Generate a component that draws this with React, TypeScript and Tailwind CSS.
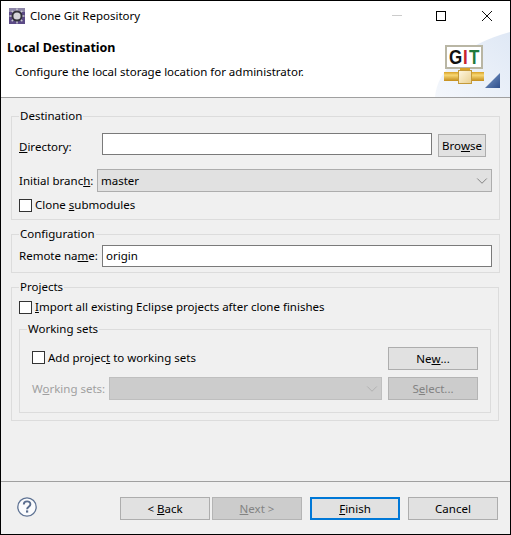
import React from 'react';
import { ChevronDown } from 'lucide-react';

const Btn = ({ children, className = '', disabled = false, focused = false }: { children: React.ReactNode; className?: string; disabled?: boolean; focused?: boolean }) => (
  <div
    className={
      'flex h-[23px] w-[90px] shrink-0 items-center justify-center text-[11.5px] ' +
      (disabled
        ? 'border border-[#b4b4b4] bg-[#cccccc] text-[#838383] '
        : focused
        ? 'border-2 border-[#0078d7] bg-[#e1e1e1] text-black '
        : 'border border-[#adadad] bg-[#e1e1e1] text-black ') +
      className
    }
  >
    {children}
  </div>
);

const Check = ({ className = '' }: { className?: string }) => (
  <div className={'h-[13px] w-[13px] shrink-0 border border-[#333333] bg-white ' + className} />
);

const Combo = ({ value, className = '', disabled = false }: { value?: string; className?: string; disabled?: boolean }) => (
  <div
    className={
      'flex h-[23px] items-center justify-between border pl-[3px] ' +
      (disabled ? 'border-[#bfbfbf] bg-[#cccccc] ' : 'border-[#adadad] bg-[#e1e1e1] ') +
      className
    }
  >
    <span className="text-[11.5px]">{value}</span>
    <ChevronDown size={18} strokeWidth={0.8} className={disabled ? 'text-[#a0a0a0]' : 'text-[#444444]'} />
  </div>
);

const Group = ({ title, className = '', children }: { title: string; className?: string; children: React.ReactNode }) => (
  <fieldset className={'border border-[#dcdcdc] ' + className}>
    <legend className="ml-[7px] px-[1px] text-[11.5px] leading-[16px]">{title}</legend>
    {children}
  </fieldset>
);

const TitleIcon = () => (
  <svg width="16" height="16" viewBox="0 0 16 16">
    <rect width="16" height="16" fill="#5b4a86" />
    <path d="M0 0h16v4H0z" fill="#8d86a8" />
    <g stroke="#c9c9d0" strokeWidth="1.5">
      <path d="M8 .5v3M8 12.5v3M.5 8h3M12.5 8h3M2.7 2.7l2 2M11.3 11.3l2 2M13.3 2.7l-2 2M4.7 11.3l-2 2" />
    </g>
    <circle cx="8" cy="8" r="5.5" fill="#33333c" />
    <circle cx="8" cy="8" r="3.6" fill="#d5d5da" />
  </svg>
);

const HelpIcon = () => (
  <svg width="20" height="20" viewBox="0 0 20 20" fill="none">
    <circle cx="10" cy="10" r="9.2" stroke="#5f7394" strokeWidth="1.3" fill="#fafbfd" />
    <path d="M6.8 7.6c0-4.2 6.600-4.200 6.600-.3 0 2.400-3.300 2.600-3.300 5" stroke="#5a6d8e" strokeWidth="1.9" />
    <rect x="9" y="13.4" width="2.2" height="2.2" fill="#5a6d8e" />
  </svg>
);

const BannerArt = () => (
  <svg width="76" height="65" viewBox="0 0 76 65" className="absolute bottom-0 right-0">
    <defs>
      <linearGradient id="wash" x1="0" y1="1" x2="1" y2="0">
        <stop offset="0" stopColor="#f4f7fc" />
        <stop offset="1" stopColor="#dfe8f5" />
      </linearGradient>
      <linearGradient id="pipe" x1="0" y1="0" x2="0" y2="1">
        <stop offset="0" stopColor="#d9a227" />
        <stop offset="0.35" stopColor="#f7d774" />
        <stop offset="1" stopColor="#c48d1c" />
      </linearGradient>
      <linearGradient id="block" x1="0" y1="0" x2="1" y2="1">
        <stop offset="0" stopColor="#fff8e2" />
        <stop offset="1" stopColor="#e9cf8f" />
      </linearGradient>
      <linearGradient id="tri" x1="0" y1="0" x2="1" y2="1">
        <stop offset="0" stopColor="#7f9fcc" />
        <stop offset="1" stopColor="#2f4f8c" />
      </linearGradient>
    </defs>
    <path d="M1 65C3 38 30 12 76 0v65z" fill="url(#wash)" />
    <rect x="12" y="14" width="36" height="22" fill="#ffffff" stroke="#b9b6a4" strokeWidth="2" />
    <g transform="scale(1 1.2)" fontFamily="Liberation Sans, sans-serif" fontWeight="700" fontSize="17">
      <text x="15" y="26.7" fill="#111111">G</text>
      <text x="29" y="26.7" fill="#c8242c">I</text>
      <text x="35" y="26.7" fill="#1f7a3c">T</text>
    </g>
    <rect x="10" y="40" width="40" height="9" fill="url(#pipe)" />
    <rect x="26" y="36" width="10" height="3" fill="#d9a227" />
    <rect x="24.5" y="38.5" width="13" height="13" fill="url(#block)" stroke="#c49a3a" />
    <path d="M66 41v15H51z" fill="url(#tri)" />
  </svg>
);

export default function App() {
  return (
    <div
      className="flex h-[535px] w-[511px] flex-col border border-black bg-[#f0f0f0] text-black"
      style={{ fontFamily: '"Noto Sans", "Open Sans", sans-serif' }}
    >
      {/* title bar */}
      <div className="flex h-[31px] shrink-0 items-center bg-white pb-[2px] pl-[8px]">
        <TitleIcon />
        <span className="ml-[5px] mt-[1px] text-[11.5px]">Clone Git Repository</span>
        <div className="ml-auto flex items-center">
          <div className="mr-[34px] h-[1px] w-[10px] bg-[#cccccc]" />
          <div className="mr-[36px] h-[10px] w-[10px] border border-black" />
          <svg width="10" height="10" viewBox="0 0 10 10" className="mr-[18px]" stroke="#111111" strokeWidth="1" fill="none">
            <path d="M0 0l10 10M10 0L0 10" />
          </svg>
        </div>
      </div>

      {/* banner */}
      <div className="relative h-[66px] shrink-0 border-b border-[#a0a0a0] bg-white pl-[6px] pt-[6px]">
        <div className="text-[12.5px] font-bold leading-[20px]">Local Destination</div>
        <div className="ml-[8px] mt-[5px] text-[11.5px] leading-[18px]">Configure the local storage location for administrator.</div>
        <BannerArt />
      </div>

      {/* body */}
      <div className="flex grow flex-col pl-[10px] pr-[11px] pt-[10px]">
        <Group title="Destination" className="h-[112px]">
          <div className="flex items-start pl-[7px] pr-[7px] pt-[9px]">
            <span className="w-[83px] pt-[5px] text-[11.5px] leading-[18px]"><span className="underline">D</span>irectory:</span>
            <div className="h-[22px] w-[330px] border border-[#7a7a7a] bg-white" />
            <div className="ml-[6px] mt-[1px] flex h-[23px] w-[48px] items-center justify-center border border-[#adadad] bg-[#e1e1e1] text-[11.5px]">
              Bro<span className="underline">w</span>se
            </div>
          </div>
          <div className="mt-[12px] flex items-center pl-[7px] pr-[7px]">
            <span className="w-[78px] text-[11.5px]">Initial branc<span className="underline">h</span>:</span>
            <Combo value="master" className="w-[395px]" />
          </div>
          <div className="mt-[7px] flex h-[13px] items-center pl-[7px]">
            <Check />
            <span className="mb-[2px] ml-[3px] text-[11.5px] leading-[13px]">Clone <span className="underline">s</span>ubmodules</span>
          </div>
        </Group>

        <Group title="Configuration" className="mt-[6px] h-[47px]">
          <div className="flex items-center pl-[7px] pr-[7px] pt-[3px]">
            <span className="w-[83px] text-[11.5px]">Remote na<span className="underline">m</span>e:</span>
            <div className="flex h-[22px] w-[390px] items-center border border-[#7a7a7a] bg-white pl-[3px] text-[11.5px]">origin</div>
          </div>
        </Group>

        <Group title="Projects" className="mt-[6px] h-[142px]">
          <div className="mt-[6px] flex h-[13px] items-center pl-[7px]">
            <Check />
            <span className="mb-[2px] ml-[3px] text-[11.5px] leading-[13px]"><span className="underline">I</span>mport all existing Eclipse projects after clone finishes</span>
          </div>
          <Group title="Working sets" className="mx-[7px] mt-[7px] h-[92px]">
            <div className="flex items-center pl-[12px] pr-[12px] pt-[10px]">
              <Check className="mb-[2px]" />
              <span className="mb-[2px] ml-[3px] text-[11.5px]">Add projec<span className="underline">t</span> to working sets</span>
              <Btn className="ml-auto">Ne<span className="underline">w</span>...</Btn>
            </div>
            <div className="mt-[7px] flex items-center pl-[12px] pr-[12px]">
              <span className="w-[77px] text-[11.5px] text-[#a0a0a0]">W<span className="underline">o</span>rking sets:</span>
              <Combo disabled className="w-[273px]" />
              <Btn disabled className="ml-auto">S<span className="underline">e</span>lect...</Btn>
            </div>
          </Group>
        </Group>
      </div>

      {/* footer */}
      <div className="flex h-[53px] shrink-0 items-start border-t border-[#a0a0a0] pl-[16px] pt-[15px]">
        <HelpIcon />
        <div className="ml-[83px] flex">
          <Btn>&lt; <span className="ml-[3px] underline">B</span>ack</Btn>
          <Btn disabled className="ml-[2px]"><span className="underline">N</span>ext &gt;</Btn>
          <Btn focused className="ml-[8px]"><span className="underline">F</span>inish</Btn>
          <Btn className="ml-[8px]">Cancel</Btn>
        </div>
      </div>
    </div>
  );
}
